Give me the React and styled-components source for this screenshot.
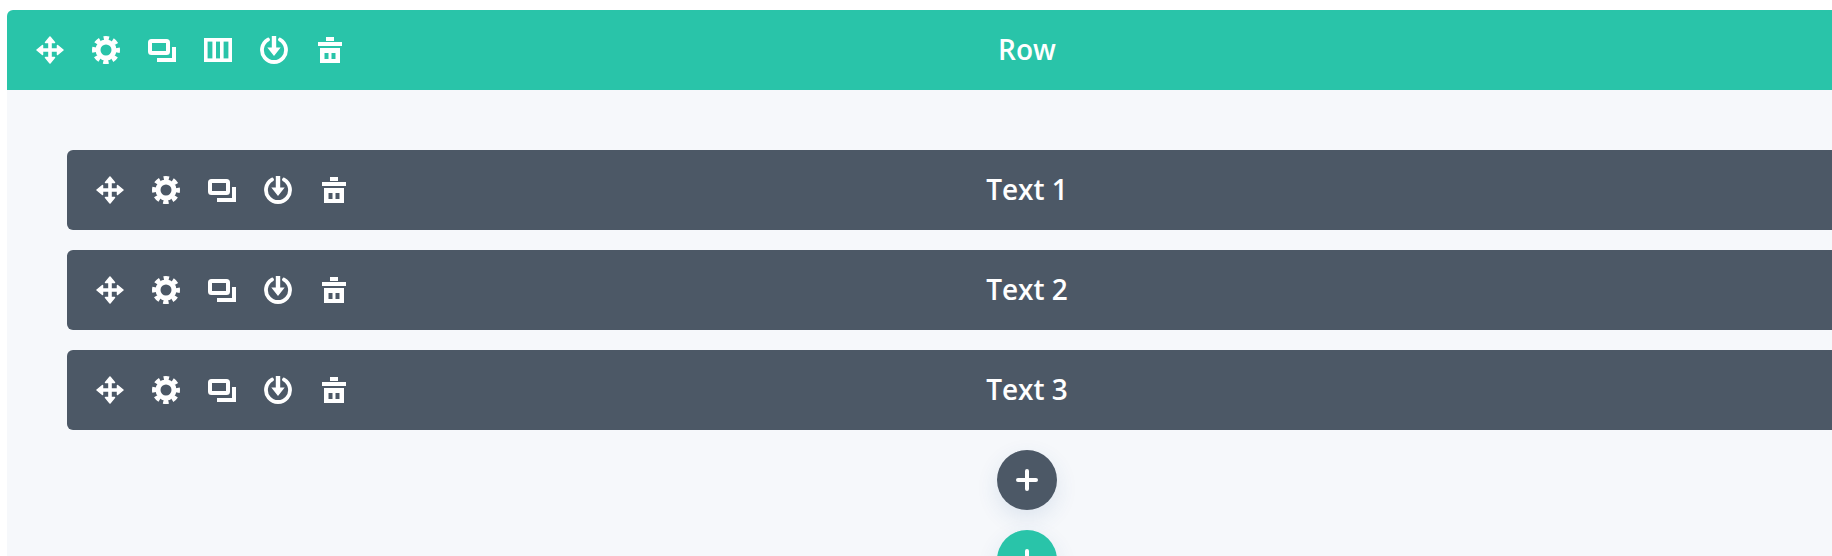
import React from 'react';
import styled, { createGlobalStyle } from 'styled-components';

const GlobalStyle = createGlobalStyle`
    html, body {
        margin: 0;
        height: 100%;
        background: #fff;
    }
    body {
        font-family: "Open Sans", "Liberation Sans", sans-serif;
    }
`;

const Viewport = styled.div`
    width: 100vw;
    height: 100vh;
    overflow: hidden;
`;

const Page = styled.div`
    width: 2040px;
    margin: 10px 0 0 7px;
`;

const Bar = styled.div`
    position: relative;
    display: flex;
    align-items: center;
    height: 80px;
    padding: 0 15px;
    box-sizing: border-box;
    color: #fff;
    background: ${props => props.$teal ? '#29c4a9' : '#4c5866'};
    border-radius: ${props => props.$teal ? '6px 6px 0 0' : '6px'};
`;

const Tools = styled.div`
    display: flex;
`;

const Tool = styled.button`
    display: flex;
    align-items: center;
    justify-content: center;
    width: 56px;
    height: 56px;
    padding: 0;
    border: 0;
    color: inherit;
    background: transparent;
    svg {
        display: block;
        width: 28px;
        height: 28px;
    }
`;

const Title = styled.span`
    position: absolute;
    left: 0;
    right: 0;
    top: 23px;
    text-align: center;
    font-size: 28px;
    font-weight: 600;
    line-height: 32px;
`;

const RowBody = styled.div`
    display: flex;
    flex-direction: column;
    padding: 60px 60px 0;
    height: 466px;
    box-sizing: border-box;
    background: #f6f8fb;
`;

const Modules = styled.div`
    display: flex;
    flex-direction: column;
    gap: 20px;
`;

const AddList = styled.div`
    display: flex;
    flex-direction: column;
    align-items: center;
    gap: 20px;
    padding-top: 20px;
`;

const AddButton = styled.button`
    display: flex;
    align-items: center;
    justify-content: center;
    flex: none;
    width: 60px;
    height: 60px;
    padding: 0;
    border: 0;
    border-radius: 50%;
    color: #fff;
    background: ${props => props.$teal ? '#29c4a9' : '#4c5866'};
    box-shadow: 0 8px 22px rgba(43, 87, 151, .12);
    svg {
        display: block;
        width: 22px;
        height: 22px;
    }
`;

const MoveIcon = () => (
    <svg viewBox="0 0 28 28" fill="currentColor">
        <path d="M12.200 5h3.600v7.200H23v3.600h-7.200V23h-3.600v-7.200H5v-3.600h7.200z" />
        <path d="M14 1l4.500 5.500H9.500zM14 27l-4.500-5.500h9zM1 14l5.500-4.500v9zM27 14l-5.500 4.500v-9z" stroke="currentColor" strokeWidth="1.500" strokeLinejoin="round" />
    </svg>
);

const GearIcon = () => (
    <svg viewBox="0 0 28 28" fill="none" stroke="currentColor">
        <circle cx="14" cy="14" r="8" strokeWidth="5" />
        <circle cx="14" cy="14" r="12" strokeWidth="4" strokeDasharray="5.420 4" strokeDashoffset="2.710" />
    </svg>
);

const CopyIcon = () => (
    <svg viewBox="0 0 28 28" fill="none" stroke="currentColor" strokeWidth="4">
        <rect x="2" y="5" width="18" height="12" rx="1.500" />
        <path d="M26 11v13H9" />
    </svg>
);

const ColumnsIcon = () => (
    <svg viewBox="0 0 28 28" fill="none" stroke="currentColor" strokeWidth="3.600">
        <rect x="1.800" y="3.800" width="24.400" height="20.400" />
        <path d="M10.200 3v22M17.800 3v22" />
    </svg>
);

const SaveIcon = () => (
    <svg viewBox="0 0 28 28" fill="none" stroke="currentColor">
        <path d="M20 3.600a12 12 0 1 1-12 0" strokeWidth="3.800" strokeLinecap="round" />
        <path d="M11.800 0h4.400v11.500h4.500L14 20l-6.700-8.500h4.500z" fill="currentColor" stroke="none" />
    </svg>
);

const TrashIcon = () => (
    <svg viewBox="0 0 28 28" fill="currentColor">
        <path d="M10 1h8v4h-8zM2 6h24v4H2z" />
        <path fillRule="evenodd" d="M4 12h20v15H4zM8.500 17v6h4v-6zM15.500 17v6h4v-6z" />
    </svg>
);

const PlusIcon = () => (
    <svg viewBox="0 0 22 22" fill="none" stroke="currentColor" strokeWidth="4" strokeLinecap="round">
        <path d="M11 2v18M2 11h18" />
    </svg>
);

const moduleTools = [MoveIcon, GearIcon, CopyIcon, SaveIcon, TrashIcon];
const rowTools = [MoveIcon, GearIcon, CopyIcon, ColumnsIcon, SaveIcon, TrashIcon];
const modules = ['Text 1', 'Text 2', 'Text 3'];

function ToolBar(props) {
    const { tools, title, teal } = props;
    return (
        <Bar $teal={teal}>
            <Tools>
                {tools.map((Icon, i) => <Tool key={i}><Icon /></Tool>)}
            </Tools>
            <Title>{title}</Title>
        </Bar>
    );
}

export default function App() {
    return (
        <Viewport>
            <GlobalStyle />
            <Page>
                <ToolBar tools={rowTools} title="Row" teal />
                <RowBody>
                    <Modules>
                        {modules.map(name => <ToolBar key={name} tools={moduleTools} title={name} />)}
                    </Modules>
                    <AddList>
                        <AddButton><PlusIcon /></AddButton>
                        <AddButton $teal><PlusIcon /></AddButton>
                    </AddList>
                </RowBody>
            </Page>
        </Viewport>
    );
}
